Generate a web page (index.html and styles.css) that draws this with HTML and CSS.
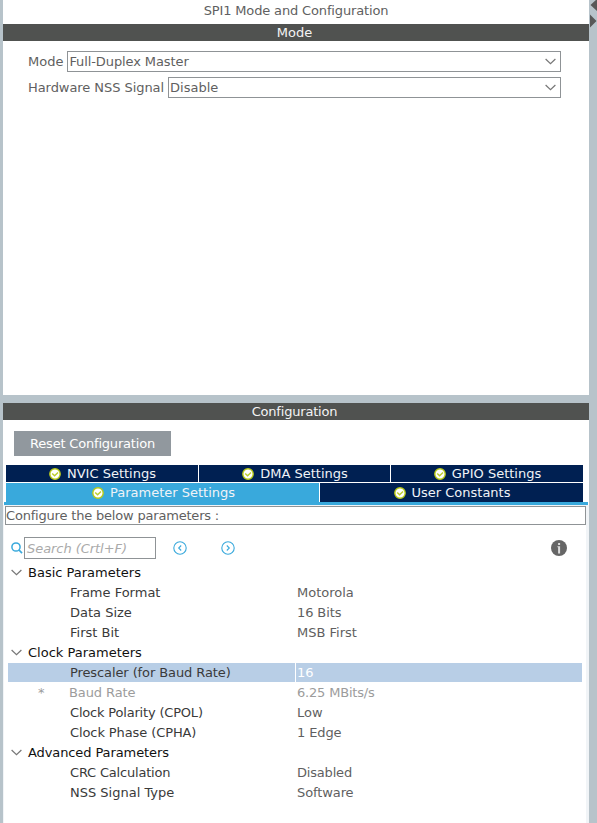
FILE: index.html
```
<!DOCTYPE html>
<html lang="en">
<head>
<meta charset="utf-8">
<title>SPI1 Mode and Configuration</title>
<link rel="stylesheet" href="styles.css">
</head>
<body>
<svg width="0" height="0" class="defs">
  <symbol id="check" viewBox="0 0 12 12"><circle cx="6" cy="6" r="5.2" fill="#fff" stroke="#b9cb17" stroke-width="1.4"/><path d="M3.2 5.4 5.6 7.8 9 4.4" fill="none" stroke="#bccd2c" stroke-width="1.4"/></symbol>
  <symbol id="chevron" viewBox="0 0 11 7"><path d="M.6 1 5.5 5.7 10.4 1" fill="none" stroke="#777" stroke-width="1.2"/></symbol>
</svg>
<div class="app">
  <main class="panels">
    <section class="panel mode">
      <h1 class="title">SPI1 Mode and Configuration</h1>
      <h2 class="bar">Mode</h2>
      <div class="fields">
        <div class="field"><span>Mode</span><div class="select snug">Full-Duplex Master<svg class="chev"><use href="#chevron"/></svg></div></div>
        <div class="field"><span class="label-long">Hardware NSS Signal</span><div class="select">Disable<svg class="chev"><use href="#chevron"/></svg></div></div>
      </div>
    </section>
    <section class="panel config">
      <h2 class="bar tight">Configuration</h2>
      <button class="reset tight">Reset Configuration</button>
      <div class="tabs">
        <div class="tabrow three">
          <div class="tab"><svg class="ok"><use href="#check"/></svg>NVIC Settings</div>
          <div class="tab"><svg class="ok"><use href="#check"/></svg>DMA Settings</div>
          <div class="tab"><svg class="ok"><use href="#check"/></svg>GPIO Settings</div>
        </div>
        <div class="tabrow two">
          <div class="tab active"><svg class="ok"><use href="#check"/></svg>Parameter Settings</div>
          <div class="tab"><svg class="ok"><use href="#check"/></svg>User Constants</div>
        </div>
      </div>
      <div class="rule"></div>
      <div class="content">
        <div class="hint tight">Configure the below parameters :</div>
        <div class="tools">
          <svg class="mag" viewBox="0 0 12 12"><circle cx="5" cy="5" r="4.1" fill="none" stroke="#39a9dc" stroke-width="1.5"/><path d="m8 8 3 3.2" stroke="#39a9dc" stroke-width="1.7"/></svg>
          <div class="search">Search (Crtl+F)</div>
          <svg class="nav prev" viewBox="0 0 14 14"><circle cx="7" cy="7" r="6.2"/><path d="M8.2 4.5 5.7 7l2.5 2.5"/></svg>
          <svg class="nav next" viewBox="0 0 14 14"><circle cx="7" cy="7" r="6.2"/><path d="M5.8 4.5 8.3 7 5.8 9.5"/></svg>
          <svg class="info" viewBox="0 0 16 16"><circle cx="8" cy="8" r="8" fill="#666"/><path d="M7.1 3h2v2h-2zM6.4 6.2h2.7v7.2H7.1V7.2h-.7z" fill="#ddd"/></svg>
        </div>
        <div class="tree">
          <div class="group"><svg class="chev"><use href="#chevron"/></svg>Basic Parameters</div>
          <div class="row"><span class="mark"></span><span class="name">Frame Format</span><span class="value">Motorola</span></div>
          <div class="row"><span class="mark"></span><span class="name">Data Size</span><span class="value snug">16 Bits</span></div>
          <div class="row"><span class="mark"></span><span class="name">First Bit</span><span class="value">MSB First</span></div>
          <div class="group"><svg class="chev"><use href="#chevron"/></svg>Clock Parameters</div>
          <div class="row selected"><span class="mark"></span><span class="name snug">Prescaler (for Baud Rate)</span><span class="value">16</span></div>
          <div class="row disabled"><span class="mark">*</span><span class="name snug">Baud Rate</span><span class="value tight">6.25 MBits/s</span></div>
          <div class="row"><span class="mark"></span><span class="name tight">Clock Polarity (CPOL)</span><span class="value">Low</span></div>
          <div class="row"><span class="mark"></span><span class="name snug">Clock Phase (CPHA)</span><span class="value snug">1 Edge</span></div>
          <div class="group snug"><svg class="chev"><use href="#chevron"/></svg>Advanced Parameters</div>
          <div class="row"><span class="mark"></span><span class="name tight">CRC Calculation</span><span class="value tight">Disabled</span></div>
          <div class="row"><span class="mark"></span><span class="name">NSS Signal Type</span><span class="value snug">Software</span></div>
        </div>
      </div>
    </section>
  </main>
  <aside class="divider"><svg width="8" height="28" viewBox="0 0 8 28"><path d="M8-1 1.5 5 8 11zM1 14.5 7.5 21 1 27.5z" fill="#585858"/></svg></aside>
</div>
</body>
</html>
```

FILE: styles.css
```
* { box-sizing: border-box; }
body { margin: 0; font: 13px/17px "DejaVu Sans", sans-serif; color: #5f5f61; overflow: hidden; }
svg { display: block; flex: none; }
.defs { position: absolute; }
.app { display: flex; height: 823px; background: #b7c3ca; padding-left: 3px; }
.panels { width: 586px; display: flex; flex-direction: column; gap: 8px; }
.panel { background: #fff; }
.mode { height: 395px; }
.config { flex: 1; display: flex; flex-direction: column; }
.title, .bar { margin: 0; font-size: 13px; font-weight: normal; text-align: center; }
.title { height: 24px; line-height: 22px; letter-spacing: -0.15px; }
.bar { height: 17px; line-height: 17px; background: #505250; color: #f4f4f4; padding-right: 3px; flex: none; }
.snug { letter-spacing: -0.1px; }
.tight { letter-spacing: -0.19px; }
.fields { display: flex; flex-direction: column; gap: 5px; padding: 10px 28px 0 25px; }
.field { display: flex; gap: 4px; line-height: 21px; }
.field span { white-space: nowrap; }
.label-long { letter-spacing: -0.06px; }
.select { flex: 1; height: 21px; border: 1px solid #8f9396; padding: 0 4px 0 1px; line-height: 19px; display: flex; align-items: center; justify-content: space-between; }
.chev { width: 11px; height: 7px; }
.reset { width: 157px; height: 25px; margin: 11px 0 9px 11px; border: 0; padding: 0; background: #91989e; color: #fff; font: inherit; flex: none; }
.tabs { display: flex; flex-direction: column; gap: 1px; padding: 0 6px 0 3px; }
.tabrow { display: grid; gap: 1px; }
.three { grid-template: 17px / 192px 191px 192px; }
.two { grid-template: 19px / 313px 263px; }
.tab { display: flex; align-items: center; justify-content: center; gap: 6px; background: #002052; color: #f0f3f7; line-height: 17px; padding-left: 1px; }
.tab.active { background: #39a9dc; padding-left: 2px; }
.ok { width: 12px; height: 12px; }
.rule { height: 3px; margin: 0 1px; background: #39a9dc; }
.content { flex: 1; border: solid #f1f4f7; border-width: 1px 3px 0 1px; padding-left: 1px; }
.hint { height: 19px; border: 1px solid #8f9396; line-height: 18px; }
.tools { display: flex; align-items: center; height: 22px; margin: 12px 0 4px; padding: 0 19px 0 6px; }
.mag { width: 12px; height: 12px; }
.search { width: 132px; height: 22px; margin-left: 1px; border: 1px solid #8f9396; padding-left: 2px; line-height: 21px; font-style: italic; color: #aaa; letter-spacing: -0.05px; }
.nav { width: 14px; height: 14px; fill: none; stroke: #39a9dc; stroke-width: 1.1; }
.prev { margin-left: 17px; }
.next { margin-left: 34px; }
.info { width: 16px; height: 16px; margin-left: auto; }
.tree { padding: 0 4px 0 3px; }
.group { display: flex; align-items: center; gap: 6px; height: 20px; line-height: 20px; padding-left: 3px; color: #111; }
.group .chev { margin-top: -1px; }
.row { display: grid; grid-template-columns: 62px 225px 1fr; height: 20px; line-height: 20px; }
.mark { padding-left: 30px; }
.name { color: #3a3a3a; }
.value { padding-left: 2px; }
.selected { background: #b8cee6; height: 19px; margin-bottom: 1px; }
.selected .value { color: #fff; border-left: 1px solid #fff; padding-left: 1px; }
.disabled, .disabled .name { color: #9c9c9c; }
.disabled .name { margin-left: -1px; }
.divider { width: 8px; }
```
